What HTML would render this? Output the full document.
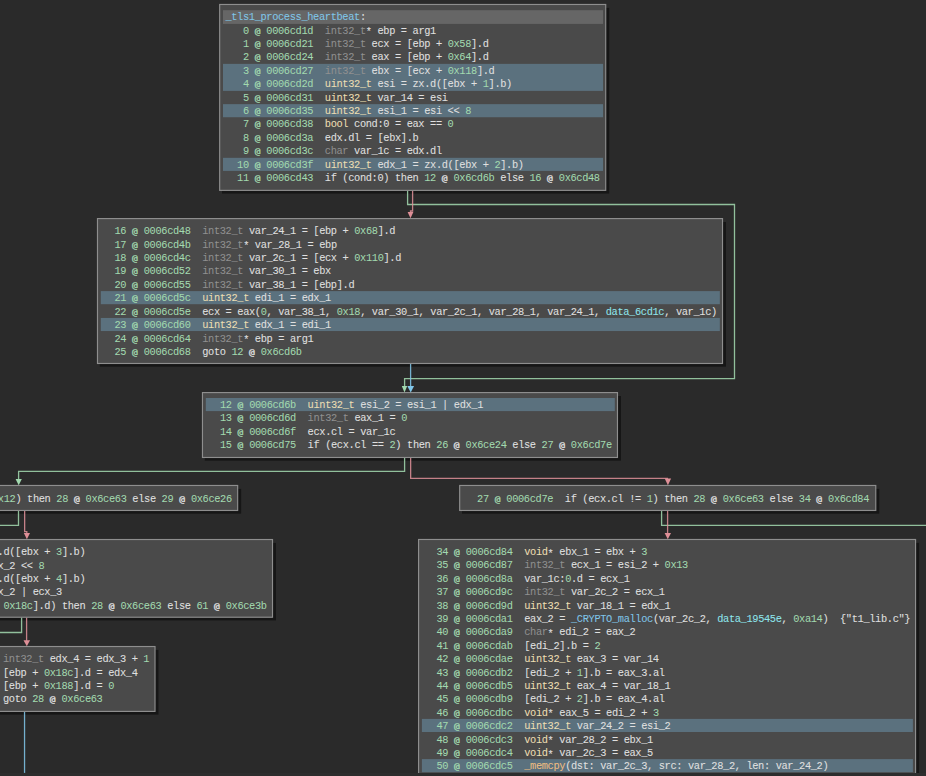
<!DOCTYPE html>
<html lang="en"><head><meta charset="utf-8"><title>Graph view - _tls1_process_heartbeat</title>
<style>
html,body{margin:0;padding:0;background:#2a2a2a;}
body{width:926px;height:776px;overflow:hidden;position:relative;
 font-family:"Liberation Mono","DejaVu Sans Mono",monospace;font-size:10.35px;color:#e0e0e0;}
#gfx{position:absolute;left:0;top:0;}
.ln{position:absolute;white-space:pre;-webkit-text-stroke:0.05px currentColor;letter-spacing:-0.360px;line-height:13.42px;height:13.42px;margin:0;}
i{font-style:normal}
b{font-weight:normal;display:inline-block;line-height:1px;font-family:"DejaVu Sans Mono","Liberation Mono",monospace;font-size:9.5px;letter-spacing:0;width:5.851px;-webkit-text-stroke:0.3px currentColor;}
u{text-decoration:none;position:relative;top:1.8px}
.g{color:#a2d9af}
.y{color:#eddfb3}
.d{color:#909090}
.w{color:#e0e0e0}
.b{color:#80c6e9}
.c{color:#8ee6ed}
.o{color:#edbd81}
#bar{position:absolute;left:0;top:773px;width:926px;height:3px;background:#2d2d2d}
</style></head><body>
<svg id="gfx" width="926" height="776" viewBox="0 0 926 776">
<rect x="222.00" y="7.90" width="387.20" height="185.65" fill="#161616"/>
<rect x="99.80" y="222.00" width="626.20" height="144.65" fill="#161616"/>
<rect x="204.80" y="396.00" width="416.15" height="64.65" fill="#161616"/>
<rect x="-192.72" y="488.90" width="433.87" height="24.75" fill="#161616"/>
<rect x="462.00" y="488.90" width="417.25" height="24.75" fill="#161616"/>
<rect x="-216.38" y="542.95" width="492.38" height="77.45" fill="#161616"/>
<rect x="-99.84" y="649.95" width="258.34" height="64.65" fill="#161616"/>
<rect x="420.90" y="542.90" width="498.15" height="259.70" fill="#161616"/>
<polyline fill="none" stroke="#a2d9af" stroke-width="1.3" stroke-opacity="0.86" stroke-linejoin="miter" points="407.60,190.50 407.60,204.50 734.50,204.50 734.50,378.55 404.60,378.55 404.60,386.50"/>
<polyline fill="none" stroke="#de8f97" stroke-width="1.3" stroke-opacity="0.86" stroke-linejoin="miter" points="412.60,190.50 412.60,211.00 410.50,211.00 410.50,212.50"/>
<polyline fill="none" stroke="#80c6e9" stroke-width="1.3" stroke-opacity="0.86" stroke-linejoin="miter" points="410.60,363.50 410.60,387.00"/>
<polyline fill="none" stroke="#a2d9af" stroke-width="1.3" stroke-opacity="0.86" stroke-linejoin="miter" points="404.60,457.50 404.60,471.40 18.60,471.40 18.60,479.50"/>
<polyline fill="none" stroke="#de8f97" stroke-width="1.3" stroke-opacity="0.86" stroke-linejoin="miter" points="410.65,457.50 410.65,478.45 668.00,478.45"/>
<polyline fill="none" stroke="#a2d9af" stroke-width="1.3" stroke-opacity="0.86" stroke-linejoin="miter" points="661.60,510.50 661.60,525.45 930.00,525.45"/>
<polyline fill="none" stroke="#de8f97" stroke-width="1.3" stroke-opacity="0.86" stroke-linejoin="miter" points="667.60,510.50 667.60,534.00"/>
<polyline fill="none" stroke="#a2d9af" stroke-width="1.3" stroke-opacity="0.86" stroke-linejoin="miter" points="18.50,510.50 18.50,525.40 -5.00,525.40"/>
<polyline fill="none" stroke="#de8f97" stroke-width="1.3" stroke-opacity="0.86" stroke-linejoin="miter" points="24.65,510.50 24.65,531.60 26.80,531.60 26.80,534.00"/>
<polyline fill="none" stroke="#a2d9af" stroke-width="1.3" stroke-opacity="0.86" stroke-linejoin="miter" points="21.60,617.30 21.60,632.50 -5.00,632.50"/>
<polyline fill="none" stroke="#de8f97" stroke-width="1.3" stroke-opacity="0.86" stroke-linejoin="miter" points="26.60,617.30 26.60,641.00"/>
<polyline fill="none" stroke="#80c6e9" stroke-width="1.3" stroke-opacity="0.86" stroke-linejoin="miter" points="24.55,711.50 24.55,772.90"/>
<rect x="219.67" y="4.47" width="386.05" height="185.90" fill="#4a4a4a" stroke="#8e8e8e" stroke-width="1.15"/>
<rect x="223.00" y="10.20" width="380.05" height="13.70" fill="#666666"/>
<rect x="223.00" y="63.88" width="380.05" height="27.02" fill="#5b717e"/>
<rect x="223.00" y="104.14" width="380.05" height="13.10" fill="#5b717e"/>
<rect x="223.00" y="157.82" width="380.05" height="13.10" fill="#5b717e"/>
<rect x="97.48" y="218.57" width="625.05" height="144.90" fill="#4a4a4a" stroke="#8e8e8e" stroke-width="1.15"/>
<rect x="100.80" y="291.10" width="619.05" height="13.10" fill="#5b717e"/>
<rect x="100.80" y="317.94" width="619.05" height="13.10" fill="#5b717e"/>
<rect x="202.47" y="392.57" width="415.00" height="64.90" fill="#4a4a4a" stroke="#8e8e8e" stroke-width="1.15"/>
<rect x="205.80" y="398.00" width="409.00" height="13.10" fill="#5b717e"/>
<rect x="-195.05" y="485.47" width="432.72" height="25.00" fill="#4a4a4a" stroke="#8e8e8e" stroke-width="1.15"/>
<rect x="459.68" y="485.47" width="416.10" height="25.00" fill="#4a4a4a" stroke="#8e8e8e" stroke-width="1.15"/>
<rect x="-218.71" y="539.53" width="491.23" height="77.70" fill="#4a4a4a" stroke="#8e8e8e" stroke-width="1.15"/>
<rect x="-102.17" y="646.53" width="257.19" height="64.90" fill="#4a4a4a" stroke="#8e8e8e" stroke-width="1.15"/>
<rect x="418.57" y="539.48" width="497.00" height="259.95" fill="#4a4a4a" stroke="#8e8e8e" stroke-width="1.15"/>
<rect x="421.90" y="718.90" width="491.00" height="13.10" fill="#5b717e"/>
<rect x="421.90" y="759.10" width="491.00" height="13.10" fill="#5b717e"/>
<polygon fill="#a2d9af" points="401.80,386.10 407.20,386.10 404.50,392.40"/>
<polygon fill="#de8f97" points="407.60,211.90 413.40,211.90 410.50,218.30"/>
<polygon fill="#80c6e9" points="407.30,386.10 414.10,386.10 410.70,392.40"/>
<polygon fill="#a2d9af" points="15.60,478.90 21.80,478.90 18.70,485.20"/>
<polygon fill="#de8f97" points="664.70,478.60 671.10,478.60 667.90,485.20"/>
<polygon fill="#de8f97" points="664.60,533.10 671.00,533.10 667.80,539.30"/>
<polygon fill="#de8f97" points="23.80,533.10 30.00,533.10 26.90,539.30"/>
<polygon fill="#de8f97" points="23.50,640.30 30.10,640.30 26.80,646.30"/>
</svg>
<div class="ln" style="left:225.40px;top:11.10px"><i class="b">_tls1_process_heartbeat</i>:</div>
<div class="ln" style="left:225.40px;top:24.52px"><i class="g">   0 <b>@</b> 0006cd1d  </i><i class="d">int32_t</i><u>*</u> ebp = arg1</div>
<div class="ln" style="left:225.40px;top:37.94px"><i class="g">   1 <b>@</b> 0006cd21  </i><i class="d">int32_t</i> ecx = [ebp + <i class="g">0x58</i>].d</div>
<div class="ln" style="left:225.40px;top:51.36px"><i class="g">   2 <b>@</b> 0006cd24  </i><i class="d">int32_t</i> eax = [ebp + <i class="g">0x64</i>].d</div>
<div class="ln" style="left:225.40px;top:64.78px"><i class="g">   3 <b>@</b> 0006cd27  </i><i class="d">int32_t</i> ebx = [ecx + <i class="g">0x118</i>].d</div>
<div class="ln" style="left:225.40px;top:78.20px"><i class="g">   4 <b>@</b> 0006cd2d  </i><i class="y">uint32_t</i> esi = zx.d([ebx + <i class="g">1</i>].b)</div>
<div class="ln" style="left:225.40px;top:91.62px"><i class="g">   5 <b>@</b> 0006cd31  </i><i class="y">uint32_t</i> var_14 = esi</div>
<div class="ln" style="left:225.40px;top:105.04px"><i class="g">   6 <b>@</b> 0006cd35  </i><i class="y">uint32_t</i> esi_1 = esi &lt;&lt; <i class="g">8</i></div>
<div class="ln" style="left:225.40px;top:118.46px"><i class="g">   7 <b>@</b> 0006cd38  </i><i class="y">bool</i> cond:0 = eax == <i class="g">0</i></div>
<div class="ln" style="left:225.40px;top:131.88px"><i class="g">   8 <b>@</b> 0006cd3a  </i>edx.dl = [ebx].b</div>
<div class="ln" style="left:225.40px;top:145.30px"><i class="g">   9 <b>@</b> 0006cd3c  </i><i class="d">char</i> var_1c = edx.dl</div>
<div class="ln" style="left:225.40px;top:158.72px"><i class="g">  10 <b>@</b> 0006cd3f  </i><i class="y">uint32_t</i> edx_1 = zx.d([ebx + <i class="g">2</i>].b)</div>
<div class="ln" style="left:225.40px;top:172.14px"><i class="g">  11 <b>@</b> 0006cd43  </i>if (cond:0) then <i class="g">12</i> <b>@</b> <i class="g">0x6cd6b</i> else <i class="g">16</i> <b>@</b> <i class="g">0x6cd48</i></div>
<div class="ln" style="left:102.80px;top:225.20px"><i class="g">  16 <b>@</b> 0006cd48  </i><i class="d">int32_t</i> var_24_1 = [ebp + <i class="g">0x68</i>].d</div>
<div class="ln" style="left:102.80px;top:238.62px"><i class="g">  17 <b>@</b> 0006cd4b  </i><i class="d">int32_t</i><u>*</u> var_28_1 = ebp</div>
<div class="ln" style="left:102.80px;top:252.04px"><i class="g">  18 <b>@</b> 0006cd4c  </i><i class="d">int32_t</i> var_2c_1 = [ecx + <i class="g">0x110</i>].d</div>
<div class="ln" style="left:102.80px;top:265.46px"><i class="g">  19 <b>@</b> 0006cd52  </i><i class="d">int32_t</i> var_30_1 = ebx</div>
<div class="ln" style="left:102.80px;top:278.88px"><i class="g">  20 <b>@</b> 0006cd55  </i><i class="d">int32_t</i> var_38_1 = [ebp].d</div>
<div class="ln" style="left:102.80px;top:292.30px"><i class="g">  21 <b>@</b> 0006cd5c  </i><i class="y">uint32_t</i> edi_1 = edx_1</div>
<div class="ln" style="left:102.80px;top:305.72px"><i class="g">  22 <b>@</b> 0006cd5e  </i>ecx = eax(<i class="g">0</i>, var_38_1, <i class="g">0x18</i>, var_30_1, var_2c_1, var_28_1, var_24_1, <i class="c">data_6cd1c</i>, var_1c)</div>
<div class="ln" style="left:102.80px;top:319.14px"><i class="g">  23 <b>@</b> 0006cd60  </i><i class="y">uint32_t</i> edx_1 = edi_1</div>
<div class="ln" style="left:102.80px;top:332.56px"><i class="g">  24 <b>@</b> 0006cd64  </i><i class="d">int32_t</i><u>*</u> ebp = arg1</div>
<div class="ln" style="left:102.80px;top:345.98px"><i class="g">  25 <b>@</b> 0006cd68  </i>goto <i class="g">12</i> <b>@</b> <i class="g">0x6cd6b</i></div>
<div class="ln" style="left:208.20px;top:398.90px"><i class="g">  12 <b>@</b> 0006cd6b  </i><i class="y">uint32_t</i> esi_2 = esi_1 | edx_1</div>
<div class="ln" style="left:208.20px;top:412.32px"><i class="g">  13 <b>@</b> 0006cd6d  </i><i class="d">int32_t</i> eax_1 = <i class="g">0</i></div>
<div class="ln" style="left:208.20px;top:425.74px"><i class="g">  14 <b>@</b> 0006cd6f  </i>ecx.cl = var_1c</div>
<div class="ln" style="left:208.20px;top:439.16px"><i class="g">  15 <b>@</b> 0006cd75  </i>if (ecx.cl == <i class="g">2</i>) then <i class="g">26</i> <b>@</b> <i class="g">0x6ce24</i> else <i class="g">27</i> <b>@</b> <i class="g">0x6cd7e</i></div>
<div class="ln" style="left:-189.32px;top:492.80px"><i class="g">  26 <b>@</b> 0006ce24  </i>if (ecx.cl != <i class="g">0x12</i>) then <i class="g">28</i> <b>@</b> <i class="g">0x6ce63</i> else <i class="g">29</i> <b>@</b> <i class="g">0x6ce26</i></div>
<div class="ln" style="left:465.40px;top:492.80px"><i class="g">  27 <b>@</b> 0006cd7e  </i>if (ecx.cl != <i class="g">1</i>) then <i class="g">28</i> <b>@</b> <i class="g">0x6ce63</i> else <i class="g">34</i> <b>@</b> <i class="g">0x6cd84</i></div>
<div class="ln" style="left:-212.98px;top:546.15px"><i class="g">  29 <b>@</b> 0006ce26  </i><i class="y">uint32_t</i> ecx_2 = zx.d([ebx + <i class="g">3</i>].b)</div>
<div class="ln" style="left:-212.98px;top:559.57px"><i class="g">  30 <b>@</b> 0006ce2a  </i><i class="y">uint32_t</i> ecx_3 = ecx_2 &lt;&lt; <i class="g">8</i></div>
<div class="ln" style="left:-212.98px;top:572.99px"><i class="g">  31 <b>@</b> 0006ce2d  </i><i class="y">uint32_t</i> edx_2 = zx.d([ebx + <i class="g">4</i>].b)</div>
<div class="ln" style="left:-212.98px;top:586.41px"><i class="g">  32 <b>@</b> 0006ce31  </i><i class="y">uint32_t</i> edx_3 = edx_2 | ecx_3</div>
<div class="ln" style="left:-212.98px;top:599.83px"><i class="g">  33 <b>@</b> 0006ce33  </i>if (edx_3 u&gt; [ebp + <i class="g">0x18c</i>].d) then <i class="g">28</i> <b>@</b> <i class="g">0x6ce63</i> else <i class="g">61</i> <b>@</b> <i class="g">0x6ce3b</i></div>
<div class="ln" style="left:-96.44px;top:653.15px"><i class="g">  61 <b>@</b> 0006ce3b  </i><i class="d">int32_t</i> edx_4 = edx_3 + <i class="g">1</i></div>
<div class="ln" style="left:-96.44px;top:666.57px"><i class="g">  62 <b>@</b> 0006ce3e  </i>[ebp + <i class="g">0x18c</i>].d = edx_4</div>
<div class="ln" style="left:-96.44px;top:679.99px"><i class="g">  63 <b>@</b> 0006ce44  </i>[ebp + <i class="g">0x188</i>].d = <i class="g">0</i></div>
<div class="ln" style="left:-96.44px;top:693.41px"><i class="g">  64 <b>@</b> 0006ce4e  </i>goto <i class="g">28</i> <b>@</b> <i class="g">0x6ce63</i></div>
<div class="ln" style="left:424.80px;top:545.90px"><i class="g">  34 <b>@</b> 0006cd84  </i><i class="y">void</i><u>*</u> ebx_1 = ebx + <i class="g">3</i></div>
<div class="ln" style="left:424.80px;top:559.30px"><i class="g">  35 <b>@</b> 0006cd87  </i><i class="d">int32_t</i> ecx_1 = esi_2 + <i class="g">0x13</i></div>
<div class="ln" style="left:424.80px;top:572.70px"><i class="g">  36 <b>@</b> 0006cd8a  </i>var_1c:<i class="g">0</i>.d = ecx_1</div>
<div class="ln" style="left:424.80px;top:586.10px"><i class="g">  37 <b>@</b> 0006cd9c  </i><i class="d">int32_t</i> var_2c_2 = ecx_1</div>
<div class="ln" style="left:424.80px;top:599.50px"><i class="g">  38 <b>@</b> 0006cd9d  </i><i class="y">uint32_t</i> var_18_1 = edx_1</div>
<div class="ln" style="left:424.80px;top:612.90px"><i class="g">  39 <b>@</b> 0006cda1  </i>eax_2 = <i class="b">_CRYPTO_malloc</i>(var_2c_2, <i class="c">data_19545e</i>, <i class="g">0xa14</i>)  {"t1_lib.c"}</div>
<div class="ln" style="left:424.80px;top:626.30px"><i class="g">  40 <b>@</b> 0006cda9  </i><i class="d">char</i><u>*</u> edi_2 = eax_2</div>
<div class="ln" style="left:424.80px;top:639.70px"><i class="g">  41 <b>@</b> 0006cdab  </i>[edi_2].b = <i class="g">2</i></div>
<div class="ln" style="left:424.80px;top:653.10px"><i class="g">  42 <b>@</b> 0006cdae  </i><i class="y">uint32_t</i> eax_3 = var_14</div>
<div class="ln" style="left:424.80px;top:666.50px"><i class="g">  43 <b>@</b> 0006cdb2  </i>[edi_2 + <i class="g">1</i>].b = eax_3.al</div>
<div class="ln" style="left:424.80px;top:679.90px"><i class="g">  44 <b>@</b> 0006cdb5  </i><i class="y">uint32_t</i> eax_4 = var_18_1</div>
<div class="ln" style="left:424.80px;top:693.30px"><i class="g">  45 <b>@</b> 0006cdb9  </i>[edi_2 + <i class="g">2</i>].b = eax_4.al</div>
<div class="ln" style="left:424.80px;top:706.70px"><i class="g">  46 <b>@</b> 0006cdbc  </i><i class="y">void</i><u>*</u> eax_5 = edi_2 + <i class="g">3</i></div>
<div class="ln" style="left:424.80px;top:720.10px"><i class="g">  47 <b>@</b> 0006cdc2  </i><i class="y">uint32_t</i> var_24_2 = esi_2</div>
<div class="ln" style="left:424.80px;top:733.50px"><i class="g">  48 <b>@</b> 0006cdc3  </i><i class="y">void</i><u>*</u> var_28_2 = ebx_1</div>
<div class="ln" style="left:424.80px;top:746.90px"><i class="g">  49 <b>@</b> 0006cdc4  </i><i class="y">void</i><u>*</u> var_2c_3 = eax_5</div>
<div class="ln" style="left:424.80px;top:760.30px"><i class="g">  50 <b>@</b> 0006cdc5  </i><i class="o">_memcpy</i>(dst: var_2c_3, src: var_28_2, len: var_24_2)</div>
<div class="ln" style="left:424.80px;top:773.70px"><i class="g">  51 <b>@</b> 0006cdca  </i>eax_6 = edi_2</div>
<div id="bar"></div>
</body></html>
